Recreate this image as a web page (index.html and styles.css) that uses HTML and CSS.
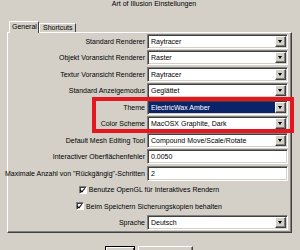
FILE: index.html
```html
<!DOCTYPE html>
<html>
<head>
<meta charset="utf-8">
<link rel="stylesheet" href="styles.css">
</head>
<body>
<div class="title">Art of Illusion Einstellungen</div>
<div class="tabs">
  <div class="tab active">General</div>
  <div class="tab">Shortcuts</div>
</div>
<div class="panel">
  <div class="form">
    <div class="label">Standard Renderer</div>
    <div class="combo"><div class="value">Raytracer</div><div class="btn"><i></i></div></div>

    <div class="label">Objekt Voransicht Renderer</div>
    <div class="combo"><div class="value">Raster</div><div class="btn"><i></i></div></div>

    <div class="label">Textur Voransicht Renderer</div>
    <div class="combo"><div class="value">Raytracer</div><div class="btn"><i></i></div></div>

    <div class="label">Standard Anzeigemodus</div>
    <div class="combo"><div class="value">Geglättet</div><div class="btn"><i></i></div></div>

    <div class="label">Theme</div>
    <div class="combo"><div class="value selected">ElectricWax Amber</div><div class="btn"><i></i></div></div>

    <div class="label">Color Scheme</div>
    <div class="combo"><div class="value">MacOSX Graphite, Dark</div><div class="btn"><i></i></div></div>

    <div class="label">Default Mesh Editing Tool</div>
    <div class="combo"><div class="value">Compound Move/Scale/Rotate</div><div class="btn"><i></i></div></div>

    <div class="label">Interactiver Oberflächenfehler</div>
    <div class="field">0.0050</div>

    <div class="label">Maximale Anzahl von "Rückgängig"-Schritten</div>
    <div class="field">2</div>

    <div class="check-row"><span class="check"></span><span>Benutze OpenGL für Interaktives Rendern</span></div>

    <div class="check-row"><span class="check"></span><span>Beim Speichern Sicherungskopien behalten</span></div>

    <div class="label">Sprache</div>
    <div class="combo"><div class="value">Deutsch</div><div class="btn"><i></i></div></div>
  </div>
</div>
<div class="buttons">
  <div class="button ok"></div>
  <div class="button cancel"></div>
</div>
<div class="highlight"></div>
</body>
</html>
```
FILE: styles.css
```css
html, body {
  margin: 0;
  padding: 0;
}
body {
  width: 300px;
  height: 250px;
  overflow: hidden;
  background: #d4d0c8;
  font-family: "Liberation Sans", Arial, sans-serif;
  font-size: 7px;
  color: #000;
  position: relative;
}
.title {
  height: 21px;
  line-height: 7px;
  text-align: center;
  padding-left: 8px;
  box-sizing: border-box;
}
.tabs {
  display: flex;
  align-items: flex-end;
  padding-left: 9px;
  height: 12px;
  margin-bottom: -1px;
  position: relative;
  z-index: 1;
}
.tab {
  box-sizing: border-box;
  height: 9px;
  line-height: 8px;
  padding: 0 3px;
  border-top: 1px solid #fff;
  border-left: 1px solid #fff;
  border-right: 1px solid #404040;
  border-radius: 1px 1px 0 0;
  margin-bottom: 1px;
}
.tab.active {
  height: 12px;
  width: 30px;
  margin-bottom: 0;
  padding: 0 2px;
  line-height: 9px;
  background: #d4d0c8;
}
.tab + .tab {
  width: 37px;
  padding-left: 3px;
}
.panel {
  margin-left: 7px;
  width: 285px;
  height: 201px;
  box-sizing: border-box;
  border-top: 1px solid #fff;
  border-left: 1px solid #fff;
  border-right: 1px solid #404040;
  border-bottom: 1px solid #404040;
  box-shadow: inset -1px -1px 0 #808080;
}
.form {
  display: grid;
  grid-template-columns: 137px 141px;
  grid-auto-rows: 16.5px;
  column-gap: 2px;
  align-items: center;
}
.label {
  display: flex;
  justify-content: flex-end;
  white-space: nowrap;
}
.combo, .field {
  box-sizing: border-box;
  height: 15px;
  background: #fff;
  border-top: 1px solid #808080;
  border-left: 1px solid #808080;
  border-bottom: 1px solid #fff;
  border-right: 1px solid #fff;
  box-shadow: inset 1px 1px 0 #404040, inset -1px -1px 0 #d4d0c8;
  padding: 1px;
  display: flex;
}
.field {
  padding-left: 3px;
  line-height: 11px;
  white-space: nowrap;
}
.value {
  flex: 1;
  padding-left: 2px;
  line-height: 11px;
  white-space: nowrap;
  overflow: hidden;
}
.value.selected {
  background: #0a246a;
  color: #fff;
}
.btn {
  width: 11px;
  box-sizing: border-box;
  background: #d4d0c8;
  border-top: 1px solid #fff;
  border-left: 1px solid #fff;
  border-right: 1px solid #404040;
  border-bottom: 1px solid #404040;
  box-shadow: inset -1px -1px 0 #808080;
  display: flex;
  align-items: center;
  justify-content: center;
}
.btn i {
  width: 0;
  height: 0;
  border-left: 2.5px solid transparent;
  border-right: 2.5px solid transparent;
  border-top: 3px solid #000;
  margin-right: 1px;
}
.check-row {
  grid-column: 1 / -1;
  display: flex;
  justify-content: center;
  align-items: center;
  gap: 2px;
  white-space: nowrap;
  padding-left: 2px;
}
.check {
  width: 8px;
  height: 8px;
  box-sizing: border-box;
  background: #fff;
  border-top: 1px solid #808080;
  border-left: 1px solid #808080;
  border-bottom: 1px solid #fff;
  border-right: 1px solid #fff;
  box-shadow: inset 1px 1px 0 #404040;
  position: relative;
}
.check::after {
  content: "";
  position: absolute;
  left: 1px;
  top: 0px;
  width: 2px;
  height: 4px;
  border-right: 1.5px solid #000;
  border-bottom: 1.5px solid #000;
  transform: rotate(40deg);
}
.buttons {
  display: flex;
  justify-content: center;
  gap: 3px;
  margin-top: 13px;
  padding-right: 2px;
}
.button {
  box-sizing: border-box;
  height: 15px;
  border-top: 1px solid #fff;
  border-left: 1px solid #fff;
  border-right: 1px solid #404040;
  border-bottom: 1px solid #404040;
  box-shadow: inset -1px -1px 0 #808080;
}
.button.ok {
  width: 30px;
  border: 1px solid #000;
  box-shadow: inset 1px 1px 0 #fff, inset -1px -1px 0 #404040;
}
.button.cancel {
  width: 55px;
}
.highlight {
  position: absolute;
  left: 92px;
  top: 97px;
  width: 202px;
  height: 36px;
  box-sizing: border-box;
  border: 4px solid #e3171d;
}
```
